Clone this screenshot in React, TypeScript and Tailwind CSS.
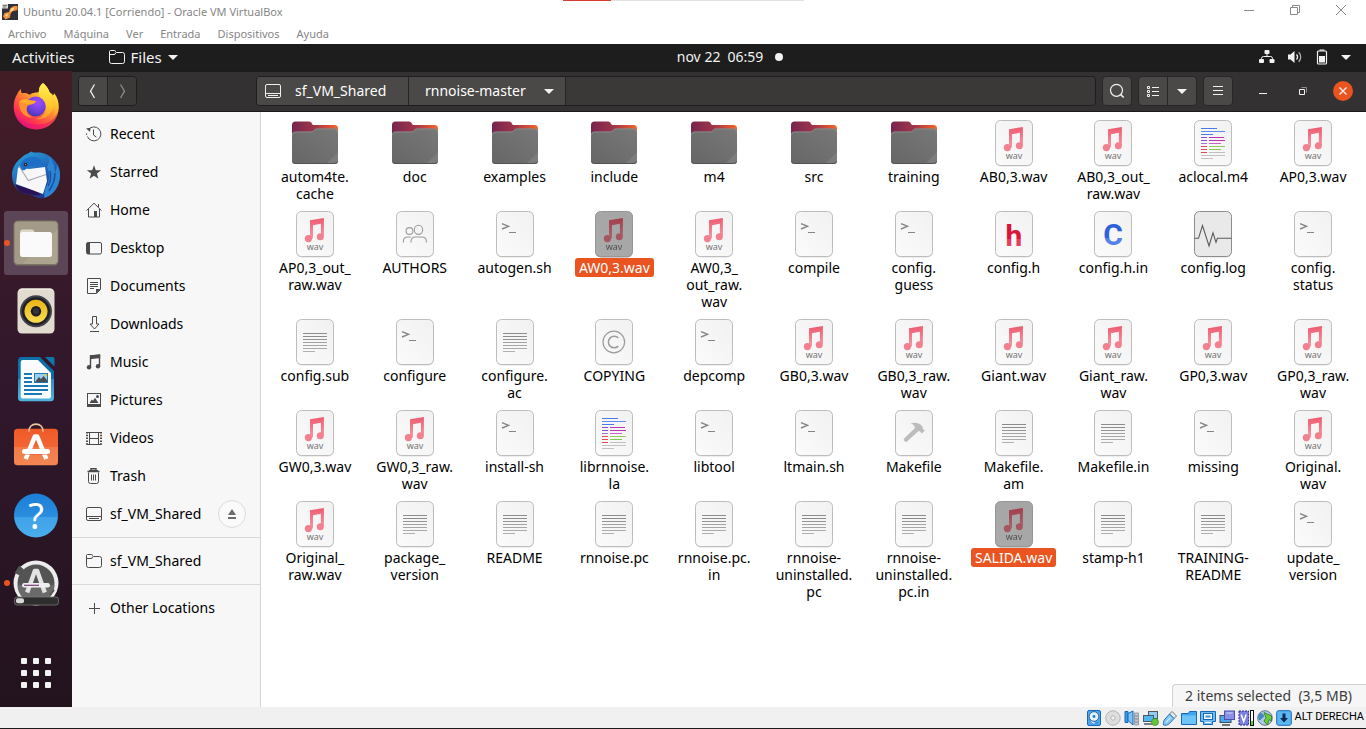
import type { ReactNode } from "react";

const UI = "font-['Noto_Sans',sans-serif]";

/* ---------- file grid data ---------- */

type Kind =
  | "folder" | "wav" | "code" | "authors" | "script" | "header" | "csource"
  | "log" | "text" | "copying" | "make";

type FileItem = { name: string; kind: Kind; selected?: boolean };

const files: FileItem[] = [
  { name: "autom4te.\ncache", kind: "folder" },
  { name: "doc", kind: "folder" },
  { name: "examples", kind: "folder" },
  { name: "include", kind: "folder" },
  { name: "m4", kind: "folder" },
  { name: "src", kind: "folder" },
  { name: "training", kind: "folder" },
  { name: "AB0,3.wav", kind: "wav" },
  { name: "AB0,3_out_\nraw.wav", kind: "wav" },
  { name: "aclocal.m4", kind: "code" },
  { name: "AP0,3.wav", kind: "wav" },

  { name: "AP0,3_out_\nraw.wav", kind: "wav" },
  { name: "AUTHORS", kind: "authors" },
  { name: "autogen.sh", kind: "script" },
  { name: "AW0,3.wav", kind: "wav", selected: true },
  { name: "AW0,3_\nout_raw.\nwav", kind: "wav" },
  { name: "compile", kind: "script" },
  { name: "config.\nguess", kind: "script" },
  { name: "config.h", kind: "header" },
  { name: "config.h.in", kind: "csource" },
  { name: "config.log", kind: "log" },
  { name: "config.\nstatus", kind: "script" },

  { name: "config.sub", kind: "text" },
  { name: "configure", kind: "script" },
  { name: "configure.\nac", kind: "text" },
  { name: "COPYING", kind: "copying" },
  { name: "depcomp", kind: "script" },
  { name: "GB0,3.wav", kind: "wav" },
  { name: "GB0,3_raw.\nwav", kind: "wav" },
  { name: "Giant.wav", kind: "wav" },
  { name: "Giant_raw.\nwav", kind: "wav" },
  { name: "GP0,3.wav", kind: "wav" },
  { name: "GP0,3_raw.\nwav", kind: "wav" },

  { name: "GW0,3.wav", kind: "wav" },
  { name: "GW0,3_raw.\nwav", kind: "wav" },
  { name: "install-sh", kind: "script" },
  { name: "librnnoise.\nla", kind: "code" },
  { name: "libtool", kind: "script" },
  { name: "ltmain.sh", kind: "script" },
  { name: "Makefile", kind: "make" },
  { name: "Makefile.\nam", kind: "text" },
  { name: "Makefile.in", kind: "text" },
  { name: "missing", kind: "script" },
  { name: "Original.\nwav", kind: "wav" },

  { name: "Original_\nraw.wav", kind: "wav" },
  { name: "package_\nversion", kind: "text" },
  { name: "README", kind: "text" },
  { name: "rnnoise.pc", kind: "text" },
  { name: "rnnoise.pc.\nin", kind: "text" },
  { name: "rnnoise-\nuninstalled.\npc", kind: "text" },
  { name: "rnnoise-\nuninstalled.\npc.in", kind: "text" },
  { name: "SALIDA.wav", kind: "wav", selected: true },
  { name: "stamp-h1", kind: "text" },
  { name: "TRAINING-\nREADME", kind: "text" },
  { name: "update_\nversion", kind: "script" },
];

/* ---------- file icons ---------- */

function SharedGradients() {
  return (
    <svg width="0" height="0" className="absolute" aria-hidden="true">
      <defs>
        <linearGradient id="folderBack" x1="0" y1="0" x2="1" y2="0">
          <stop offset="0" stopColor="#77244f" />
          <stop offset="0.5" stopColor="#a0354a" />
          <stop offset="0.8" stopColor="#d94f33" />
          <stop offset="1" stopColor="#ee6a30" />
        </linearGradient>
        <linearGradient id="folderFront" x1="0" y1="1" x2="1" y2="0">
          <stop offset="0" stopColor="#666666" />
          <stop offset="1" stopColor="#787878" />
        </linearGradient>
        <linearGradient id="sheet" x1="0" y1="1" x2="1" y2="0">
          <stop offset="0" stopColor="#fbfbfb" />
          <stop offset="1" stopColor="#f1f1f1" />
        </linearGradient>
        <linearGradient id="note" x1="0" y1="0" x2="0" y2="1">
          <stop offset="0" stopColor="#ee5a70" />
          <stop offset="1" stopColor="#f69aa5" />
        </linearGradient>
        <linearGradient id="redLetter" x1="0" y1="0" x2="0" y2="1">
          <stop offset="0.6" stopColor="#d9153a" />
          <stop offset="0.6" stopColor="#e33f5e" />
        </linearGradient>
        <linearGradient id="blueLetter" x1="0" y1="0" x2="0" y2="1">
          <stop offset="0.6" stopColor="#2f61db" />
          <stop offset="0.6" stopColor="#5580e6" />
        </linearGradient>
      </defs>
    </svg>
  );
}

function Lines({ rows }: { rows: [number, number, number, string][] }) {
  return (
    <>
      {rows.map(([x, y, w, c], i) => (
        <rect key={i} x={x} y={y} width={w} height="1" fill={c} />
      ))}
    </>
  );
}

const textRows: [number, number, number, string][] = [
  [12, 14, 24, "#8c8c8c"], [12, 17, 24, "#8c8c8c"], [12, 20, 24, "#949494"],
  [12, 23, 24, "#a2a2a2"], [12, 26, 24, "#a5a5a5"], [12, 29, 24, "#aaaaaa"], [12, 32, 12, "#b0b0b0"],
];

const codeRows: [number, number, number, string][] = [
  [12, 8, 16, "#4b7be8"], [12, 11, 24, "#5f8cf0"], [12, 14, 12, "#4b7be8"],
  [12, 17, 6, "#8a4fc8"], [20, 17, 15, "#bb35b5"],
  [12, 20, 6, "#8a4fc8"], [20, 20, 16, "#bb35b5"],
  [12, 23, 6, "#a673dd"], [20, 23, 12, "#d05fcd"],
  [12, 26, 6, "#e64560"], [20, 26, 16, "#8fd05a"],
  [12, 29, 6, "#e64560"], [20, 29, 12, "#86c94a"],
  [12, 32, 6, "#e64560"], [20, 32, 16, "#bfbfbf"],
  [12, 35, 24, "#c2c2c2"], [12, 38, 12, "#c2c2c2"],
];

const glyphs: Record<Exclude<Kind, "folder">, ReactNode> = {
  wav: (
    <>
      <path
        d="M19 9.2 32.9 7v18.6h-3V12.8L22 14.2v13.4h-3z"
        fill="url(#note)"
      />
      <circle cx="17.4" cy="27.6" r="3.6" fill="#f3808e" />
      <circle cx="29.3" cy="25.7" r="3.5" fill="#f3808e" />
      <text x="24" y="38.6" textAnchor="middle" fontSize="9" fill="#747474" fontFamily="Noto Sans, sans-serif">wav</text>
    </>
  ),
  code: <Lines rows={codeRows} />,
  text: <Lines rows={textRows} />,
  script: (
    <>
      <path d="m11 12.600 6.500 2.700-6.500 2.700" fill="none" stroke="#858585" strokeWidth="1.400" />
      <rect x="18" y="21" width="7" height="1" fill="#858585" />
    </>
  ),
  authors: (
    <g fill="none" stroke="#9b9b9b" strokeWidth="1.1">
      <circle cx="18.5" cy="20" r="3.4" />
      <ellipse cx="27.5" cy="18.8" rx="4.2" ry="4.6" />
      <path d="M12.4 31.5v-1.2c0-2.6 1.8-4.3 4.4-4.3h3" />
      <path d="M20 31.5v-.8c0-2.9 2-4.7 4.8-4.7h6c2.8 0 4.6 1.8 4.6 4.7v.8" />
    </g>
  ),
  header: (
    <text x="24" y="35" textAnchor="middle" fontSize="30" fontWeight="700" fill="url(#redLetter)" fontFamily="Roboto, sans-serif">h</text>
  ),
  csource: (
    <text x="24" y="34" textAnchor="middle" fontSize="30" fontWeight="700" fill="url(#blueLetter)" fontFamily="Roboto, sans-serif">C</text>
  ),
  log: (
    <path d="M5.5 27.3h4l4-12.8 6.5 20.3 4-13 3 9.5 1.4-4h14" fill="none" stroke="#595959" strokeWidth="1.1" />
  ),
  copying: (
    <g fill="none" stroke="#9b9b9b">
      <circle cx="23.8" cy="23" r="10.8" strokeWidth="1.2" />
      <path d="M28.3 18.9a5.8 5.8 0 1 0 0 8.2" strokeWidth="1.5" />
    </g>
  ),
  make: (
    <path
      d="M20.6 13.4c4-1.2 8.3-.8 10.9 2l1.2 1.4c.2.7-.2 1.3-.1 1.8l2.2 2-3 2.9-2.1-2.2c-.6-.1-1 .2-1.5 0L17 31.4c-.6.6-1.5.6-2 0l-.9-1c-.6-.6-.5-1.5.1-2l10.6-10.2c.4-2.2-1-4-4.2-4.8z"
      fill="#bcbcbc"
    />
  ),
};

function FileIcon({ kind, selected }: { kind: Kind; selected?: boolean }) {
  if (kind === "folder") {
    return (
      <svg viewBox="0 0 48 48" className="size-12" aria-hidden="true">
        <path d="M1 14V5a3.500 3.500 0 0 1 3.500-3.500H18c1.700 0 2.400 1 3 2.200.500 1 1 1.300 2 1.300h20.500A3.500 3.500 0 0 1 47 8.500V14z" fill="url(#folderBack)" />
        <path d="M1 15a3.500 3.500 0 0 1 3.500-3.500h15c1.800 0 2.400-.400 3.500-1.600C24 8.800 24.600 8.500 26.400 8.500h17.100A3.500 3.500 0 0 1 47 12v28.500a3.500 3.500 0 0 1-3.500 3.500h-39A3.500 3.500 0 0 1 1 40.500z" fill="url(#folderFront)" />
        <path d="M47 32v8.500a3.500 3.500 0 0 1-3.500 3.500H35z" fill="#7c7c7c" />
        <path d="M1.500 41.500a3 3 0 0 0 3 2h39a3 3 0 0 0 3-2" fill="none" stroke="#525252" />
        <path d="M1.500 15a3 3 0 0 1 3-3h15c2 0 2.800-.500 3.900-1.700C24.300 9.300 24.900 9 26.400 9h17.100a3 3 0 0 1 3 3" fill="none" stroke="#8f8f8f" strokeWidth=".8" />
      </svg>
    );
  }
  return (
    <svg viewBox="0 0 48 48" className={selected ? "size-12 brightness-[.68]" : "size-12"} aria-hidden="true">
      <rect x="5.500" y="1" width="37" height="45.500" rx="5" fill="#dcdcdc" />
      <rect
        x="5.500" y="0.500" width="37" height="45" rx="5"
        fill={kind === "log" ? "#e9e9e9" : "url(#sheet)"}
        stroke={kind === "log" ? "#8c8c8c" : selected ? "#dddddd" : "#bdbdbd"}
      />
      {glyphs[kind]}
    </svg>
  );
}

/* ---------- sidebar ---------- */

function Glyph({ children }: { children: ReactNode }) {
  return (
    <svg viewBox="0 0 16 16" className="size-4 shrink-0" fill="none" stroke="#4a4a4a" aria-hidden="true">
      {children}
    </svg>
  );
}

const DriveShape = (
  <>
    <rect x=".5" y="1.500" width="15" height="13" rx="1.500" />
    <path d="M1 10.500h14M3 12.500h10" />
  </>
);
const FolderShape = (
  <path d="M.5 12.500v-10a1 1 0 0 1 1-1h4a1 1 0 0 1 1 1v0a1 1 0 0 0 1 1h6a2 2 0 0 1 2 2v7a2 2 0 0 1-2 2h-11a2 2 0 0 1-2-2zM.5 5.500H5a1.500 1.500 0 0 0 1.500-1.500" />
);

type Place = { label: string; icon: ReactNode };

const places: Place[] = [
  {
    label: "Recent",
    icon: (
      <>
        <path d="M2.300 3.700A7 7 0 1 1 1.400 10.500" />
        <path d="M.6 8.800V7.400" />
        <path d="M0 2.500 4.500 1.800 4 5.800z" fill="#4a4a4a" stroke="none" />
        <path d="M7.500 3.500V9l2.800 2" />
      </>
    ),
  },
  {
    label: "Starred",
    icon: <path d="M8 1.200 9.800 6.200h5.400l-4.300 3.300 1.500 5.200L8 11.700l-4.400 3 1.500-5.200L.8 6.200h5.400z" fill="#4a4a4a" stroke="none" />,
  },
  {
    label: "Home",
    icon: (
      <>
        <path d="M.5 8.600 8 1.200l7.500 7.400M2.500 7v8h11V7M12.500 2v3" />
        <path d="M8 9h3v6H8z" fill="#4a4a4a" stroke="none" />
      </>
    ),
  },
  {
    label: "Desktop",
    icon: (
      <>
        <rect x=".5" y="2.500" width="15" height="11.500" rx="1.500" />
        <path d="M1 3h3v11H1z" fill="#4a4a4a" stroke="none" />
      </>
    ),
  },
  {
    label: "Documents",
    icon: (
      <>
        <path d="M1.500.5h13v11l-4 4h-9z" />
        <path d="M4 4.500h8M4 6.500h8M4 8.500h8M4 10.500h4" />
        <path d="M10 11h4.500L10 15.500z" fill="#4a4a4a" stroke="none" />
      </>
    ),
  },
  {
    label: "Downloads",
    icon: <path d="M6.500.5h4V8H13l-4.500 5L4 8h2.500zM4 15.500h9" />,
  },
  {
    label: "Music",
    icon: (
      <>
        <path d="M4.500 13V2l9-1v11" strokeWidth="1.400" />
        <path d="M4 1.600 14.200.4V4L4 5.200z" fill="#4a4a4a" stroke="none" />
        <circle cx="3" cy="13.200" r="2.200" fill="#4a4a4a" stroke="none" />
        <circle cx="12" cy="12.300" r="2.200" fill="#4a4a4a" stroke="none" />
      </>
    ),
  },
  {
    label: "Pictures",
    icon: (
      <>
        <rect x="1.500" y="1.500" width="13" height="12" />
        <path d="M1 12h14v3H1zM3.500 11l2.300-3.500 1.300 1.300L9 5.800l3.500 5.200z" fill="#4a4a4a" stroke="none" />
        <circle cx="11.500" cy="4.500" r="1.500" fill="#4a4a4a" stroke="none" />
      </>
    ),
  },
  {
    label: "Videos",
    icon: (
      <>
        <path d="M3.500 2.500h9v12h-9zM3.500 8.500h9" />
        <path d="M1 2v13M15 2v13" strokeWidth="2" strokeDasharray="1.500 1.300" />
        <path d="M1 2.500h14M1 14.500h14" />
      </>
    ),
  },
  {
    label: "Trash",
    icon: (
      <>
        <path d="M1.500 3.500h12M5 2V.8h5V2" strokeWidth="1.400" />
        <path d="M2.500 4.500v9a2 2 0 0 0 2 2h6a2 2 0 0 0 2-2v-9M5.500 6.500v6M7.500 6.500v6M9.500 6.500v6" />
        <path d="M3 2h9v2H3z" fill="#4a4a4a" stroke="none" />
      </>
    ),
  },
];

function PlaceRow({ label, icon, children }: Place & { children?: ReactNode }) {
  return (
    <li className="flex h-[38px] items-center pr-3.5">
      <a href="#files" className="flex flex-1 items-center gap-2 pl-3.5 text-black">
        <Glyph>{icon}</Glyph>
        <span>{label}</span>
      </a>
      {children}
    </li>
  );
}

function Sidebar() {
  return (
    <nav aria-label="Places" className="w-[189px] shrink-0 border-r border-[#d4d4d4] bg-[#f7f7f7] pt-[3px] text-sm">
      <ul>
        {places.map((p) => (
          <PlaceRow key={p.label} {...p} />
        ))}
        <PlaceRow label="sf_VM_Shared" icon={DriveShape}>
          <button aria-label="Eject sf_VM_Shared" className="flex size-7 shrink-0 items-center justify-center rounded-full border border-[#dcdcdc] bg-[#fafafa]">
            <svg viewBox="0 0 10 10" className="size-2.5" fill="#6b6b6b" aria-hidden="true">
              <path d="M5 0 9 6H1zM1 8h8v2H1z" />
            </svg>
          </button>
        </PlaceRow>
      </ul>
      <hr className="my-1 border-[#dadada]" />
      <ul>
        <PlaceRow label="sf_VM_Shared" icon={FolderShape} />
      </ul>
      <hr className="my-1 border-[#dadada]" />
      <ul>
        <PlaceRow label="Other Locations" icon={<path d="M8.500 3v11M3 8.500h11" />} />
      </ul>
    </nav>
  );
}

/* ---------- dock ---------- */

const FirefoxIcon = (
  <>
    <defs>
      <linearGradient id="ffBody" x1="0.85" y1="0.05" x2="0.2" y2="0.95">
        <stop offset="0" stopColor="#fff44f" />
        <stop offset="0.3" stopColor="#ffbd2e" />
        <stop offset="0.55" stopColor="#ff7139" />
        <stop offset="0.8" stopColor="#ff3350" />
        <stop offset="1" stopColor="#e0128e" />
      </linearGradient>
      <radialGradient id="ffGlobe" cx="0.6" cy="0.3" r="0.75">
        <stop offset="0" stopColor="#9f4dff" />
        <stop offset="0.6" stopColor="#7040dc" />
        <stop offset="1" stopColor="#4536a8" />
      </radialGradient>
      <linearGradient id="ffTail" x1="0.4" y1="0" x2="0.3" y2="1">
        <stop offset="0" stopColor="#fff250" />
        <stop offset="0.6" stopColor="#ffc52c" />
        <stop offset="1" stopColor="#ff8d30" />
      </linearGradient>
    </defs>
    <path d="M31 0c3 2.300 5.500 6 6.500 9.500 2 .5 2.700 1.500 3.500 3 1-1.200 1-2 1-2.500 3.500 4 4.800 9 4.800 14A22.500 22.500 0 0 1 1.700 24c0-5 1.300-9.500 3.300-12.500.8-2 2.200-4 4-5.500-.200 1.800.200 3.200 1 4.300 3-.600 5.600.100 7.500 1.500C21 9 24.500 10 27 9c-.500-4 1-7 4-9z" fill="url(#ffBody)" />
    <circle cx="23.700" cy="23.500" r="10" fill="url(#ffGlobe)" />
    <path d="M31 0c3 2.300 5.500 6 7 10 4.500 6 4.700 14 .5 20-3.500 5-9 7-14.500 6 7-1.500 10.500-7 10-13-.4-4.500-3-7.500-6.200-9C25.500 9.500 27 3.500 31 0z" fill="url(#ffTail)" />
    <path d="M7 19c2-2.500 5.500-3 8.500-2.300 2.500.6 5 1 8.500 1.300 0 2.500-4 3.500-7 4-1.500.3-2 1.500-2.300 3.500C14 30 17 33 21 34.500 13 35.500 6.500 28 7 19z" fill="#ff9130" />
    <path d="M7.500 19c1.800-2.800 5-3.500 8-2.600 2.500.7 5 1.300 8.300 1.500-1 2-3.500 3-7.800 3.200z" fill="#ffab2b" />
    <path d="M2.500 30a22.500 22.500 0 0 0 43.500-1C42 38 34 42 25 41.500 14 41 7 38 2.500 30z" fill="#e8136f" opacity=".55" />
  </>
);

const ThunderbirdIcon = (
  <>
    <defs>
      <linearGradient id="tbBody" x1="0.2" y1="0" x2="0.8" y2="1">
        <stop offset="0" stopColor="#2a9fd8" />
        <stop offset="0.45" stopColor="#2268bd" />
        <stop offset="1" stopColor="#1b2f8a" />
      </linearGradient>
    </defs>
    <path d="M9 7C13 3 17 2.500 19 .5 22 2 24 1.500 28 1.500 40 3.500 48 13 48 24c0 11-7 20-18 23.500C20 46 17 41 11 43 4 39 0 32 0 24 0 17 4 10.500 9 7z" fill="url(#tbBody)" />
    <path d="M3 33c4 3 18 3 26 11-8 2-14-3-18-1-4-2-7-6-8-10z" fill="#2a1355" />
    <path d="M6 16.500 17 18l16-2 2 14-4 13L4 33z" fill="#f7f7f9" />
    <path d="M7 15 16.300 29.500 34 23.500" fill="none" stroke="#a9a9b4" strokeWidth="1.100" />
    <path d="M8.700 13C8 20 12 21 15 17c4-3.500 11-3 17-2-1-6-7-10-13-9-5 .500-9 3-10.300 7z" fill="#1c6fc4" />
    <path d="M35 16c2.500 5 3 12 0 18s-3 9-2.500 13C42 44 48 35 48 24c0-4-1-8-3-11 0 4-1 7-2 9 0-7-2.500-13-7-17 2 4 1 8-1 11z" fill="#2c85d3" />
    <path d="M38 20c1 5 1 10-2 15M43 22c0 6-2 12-6 18" fill="none" stroke="#1a4fa5" strokeWidth="1.500" />
    <circle cx="13.500" cy="13.500" r="1.800" fill="#241b3d" />
    <circle cx="13.500" cy="13.500" r=".7" fill="#e0912c" />
  </>
);

const FilesAppIcon = (
  <>
    <rect x="1.500" y="1.500" width="45" height="45" rx="4.500" fill="#7b7463" />
    <rect x="2.500" y="2.500" width="43" height="42.500" rx="3.500" fill="#a39b87" />
    <path d="M12 43 45.500 10V41a4 4 0 0 1-4 4H12z" fill="#aca48f" />
    <path d="M8 13.500a3 3 0 0 1 3-3h8c1.500 0 2.500.5 3 1.500l1 1.500h14v8H8z" fill="#dbd7cb" />
    <rect x="8" y="13" width="32" height="25" rx="2.500" fill="#fafafa" />
  </>
);

const RhythmboxIcon = (
  <>
    <defs>
      <linearGradient id="rbCone" x1="0" y1="0" x2="0" y2="1">
        <stop offset="0" stopColor="#e9b514" />
        <stop offset="1" stopColor="#fbdc55" />
      </linearGradient>
    </defs>
    <rect x="5.500" y="1.500" width="37" height="45" rx="4.500" fill="#e1dccf" />
    <path d="M7 3.500a4 4 0 0 1 3-1.500h28a4 4 0 0 1 3 1.500" fill="none" stroke="#f8f6f0" />
    <circle cx="24" cy="24.300" r="16" fill="#40414a" />
    <circle cx="24" cy="24.300" r="14" fill="#202128" />
    <circle cx="24" cy="24.300" r="11.500" fill="url(#rbCone)" />
    <circle cx="24" cy="24.300" r="5.200" fill="#1e1f25" />
    <circle cx="24" cy="24.300" r="3" fill="#35363d" />
  </>
);

const WriterIcon = (
  <>
    <defs>
      <linearGradient id="lwEdge" x1="0" y1="0" x2="0" y2="1">
        <stop offset="0.5" stopColor="#0d6ea8" />
        <stop offset="0.5" stopColor="#2f8fc2" />
        <stop offset="1" stopColor="#52b4e0" />
      </linearGradient>
    </defs>
    <path d="M6 5.500A3.500 3.500 0 0 1 9.500 2H28l14 14v26.800a3.500 3.500 0 0 1-3.500 3.500h-29A3.500 3.500 0 0 1 6 42.800z" fill="url(#lwEdge)" />
    <path d="M8.700 7A2 2 0 0 1 10.700 5H26l13 13v23.500a2 2 0 0 1-2 2H10.700a2 2 0 0 1-2-2z" fill="#f9fbfc" />
    <path d="M33 2h7.500a2 2 0 0 1 2 2v7.500z" fill="#1076ae" />
    <path d="M12 19h8M12 23h8M12 27h8M12 31h24M12 35h24M12 39h18" stroke="#1d79b4" strokeWidth="1.900" />
    <rect x="22" y="18" width="14" height="10" fill="#1d79b4" />
    <rect x="23" y="19" width="12" height="8" fill="#9bd1f0" />
    <path d="m23 27 4-5 2 2 2.500-3L35 25v2z" fill="#4c4d50" />
    <path d="M32 19h3v3z" fill="#f6c32c" />
  </>
);

const SoftwareIcon = (
  <>
    <defs>
      <linearGradient id="bag" x1="0" y1="0" x2="0" y2="1">
        <stop offset="0" stopColor="#ee5a28" />
        <stop offset="0.5" stopColor="#f26533" />
        <stop offset="0.5" stopColor="#f27a4b" />
        <stop offset="1" stopColor="#f48653" />
      </linearGradient>
    </defs>
    <rect x="2" y="5.700" width="44" height="36.500" rx="3.500" fill="url(#bag)" />
    <path d="M17 8.500C17 4 20 1.200 24 1.200S31 4 31 8.500" fill="none" stroke="#ecc99d" strokeWidth="1.800" />
    <path d="M13.700 36 22.800 13.500h2.400L34.300 36" fill="none" stroke="#fff" strokeWidth="4.600" strokeLinejoin="round" />
    <rect x="10" y="26" width="28" height="5" rx="2.500" fill="#fff" />
    <path d="M11 31.500h26" stroke="#d4572c" strokeWidth=".8" opacity=".6" />
  </>
);

const HelpIcon = (
  <>
    <defs>
      <linearGradient id="helpDisc" x1="0" y1="0" x2="0" y2="1">
        <stop offset="0" stopColor="#1c7ed6" />
        <stop offset="0.54" stopColor="#2b8ede" />
        <stop offset="0.54" stopColor="#40a2e8" />
        <stop offset="1" stopColor="#4aaded" />
      </linearGradient>
    </defs>
    <circle cx="24" cy="24.500" r="22" fill="url(#helpDisc)" />
    <text x="24" y="38" textAnchor="middle" fontSize="36" fill="#fff" fontFamily="Noto Sans, sans-serif">?</text>
  </>
);

const UpdaterIcon = (
  <>
    <circle cx="24" cy="24" r="22.500" fill="#ececec" />
    <circle cx="24" cy="24" r="18.500" fill="#545454" />
    <path d="M5.500 26h37A18.500 18.500 0 0 1 5.500 26z" fill="#6a6a6a" />
    <path d="M4 13.500 7.500 8l3 2.500-2.500 5zM38 36l4-5" stroke="#545454" strokeWidth="2" fill="#545454" />
    <path d="M15.200 33.500 22.800 12h2.400l7.600 21.500" fill="none" stroke="#e3e3e3" strokeWidth="4.400" strokeLinejoin="round" />
    <rect x="10" y="24" width="28" height="4.600" rx="2.300" fill="#eeeeee" />
    <path d="M12 26.300h15" stroke="#7b3b77" strokeWidth="1.200" />
    <rect x="2.500" y="38" width="44" height="8" rx="2.500" fill="#2e2e2e" stroke="#777" strokeWidth=".8" />
    <rect x="4" y="39.300" width="8" height="5" rx="2" fill="#d8d8d8" />
  </>
);

const dockApps: { name: string; icon: ReactNode; active?: boolean; running?: boolean }[] = [
  { name: "Firefox", icon: FirefoxIcon },
  { name: "Thunderbird", icon: ThunderbirdIcon },
  { name: "Files", icon: FilesAppIcon, active: true, running: true },
  { name: "Rhythmbox", icon: RhythmboxIcon },
  { name: "LibreOffice Writer", icon: WriterIcon },
  { name: "Ubuntu Software", icon: SoftwareIcon },
  { name: "Help", icon: HelpIcon },
  { name: "Software Updater", icon: UpdaterIcon, running: true },
];

function Dock() {
  return (
    <aside className="flex w-[72px] shrink-0 flex-col gap-1 bg-linear-to-b from-[#421d26] via-[#31172c] to-[#22131d] px-1 pt-1 pb-0.5">
      {dockApps.map((app) => (
        <button
          key={app.name}
          aria-label={app.name}
          className={
            app.active
              ? "relative flex size-16 items-center justify-center rounded-[3px] bg-[#5d4558]"
              : "relative flex size-16 items-center justify-center rounded-[3px]"
          }
        >
          {app.running && <span className="absolute left-0 size-1.5 rounded-full bg-[#e95420]" />}
          <svg viewBox="0 0 48 48" className="size-12" aria-hidden="true">{app.icon}</svg>
        </button>
      ))}
      <button aria-label="Show Applications" className="mt-auto flex size-16 items-center justify-center">
        <span className="grid grid-cols-3 gap-1.5">
          {Array.from({ length: 9 }, (_, i) => (
            <span key={i} className="size-1.5 rounded-[1px] bg-[#f2f2f2]" />
          ))}
        </span>
      </button>
    </aside>
  );
}

/* ---------- host window chrome ---------- */

function HostTitle() {
  return (
    <header className="relative bg-white text-[11px] text-[#868686]">
      <div className="absolute top-0 left-[563px] flex h-px w-[241px] bg-[#e2e2e2]">
        <span className="w-12 bg-[#d93a32]" />
      </div>
      <div className="flex h-6 items-center pl-0.5">
        <svg viewBox="0 0 16 16" className="size-4" aria-hidden="true">
          <rect width="16" height="16" fill="#30313a" />
          <path d="M0 0h6v4.500H0z" fill="#d5d5d5" />
          <path d="M1 1.500h4M1 3h3" stroke="#555" strokeWidth=".7" />
          <path d="M15.500 2v4L10 7.500 8.500 10 8 13.500 3.500 15.500 1 12.500 2.500 9 7 8 8.500 4 12 2z" fill="#ef9138" />
          <path d="m9 4.500 3.500-1L11 6.500 8 8zM3 11l3-1.500L5 13z" fill="#f9d9ac" />
        </svg>
        <h1 className="ml-[5px]">Ubuntu 20.04.1 [Corriendo] - Oracle VM VirtualBox</h1>
        <div className="ml-auto flex items-center pr-[2px]">
          {[
            ["Minimizar", "M3 8.500h10"],
            ["Restaurar", "M3.500 5.500h7v7h-7zM5.500 5.500v-2h7v7h-2"],
            ["Cerrar", "m3 3 10 10M13 3 3 13"],
          ].map(([label, d]) => (
            <button key={label} aria-label={label} className="flex h-5 w-[46px] items-center justify-center pb-1">
              <svg viewBox="0 0 16 16" className="size-4" fill="none" stroke="#8a8a8a" aria-hidden="true">
                <path d={d} />
              </svg>
            </button>
          ))}
        </div>
      </div>
      <nav className="flex h-5 items-center gap-[17px] pl-2">
        {["Archivo", "Máquina", "Ver", "Entrada", "Dispositivos", "Ayuda"].map((m) => (
          <button key={m}>{m}</button>
        ))}
      </nav>
    </header>
  );
}

function Caret({ color = "#f2f2f2" }: { color?: string }) {
  return (
    <svg viewBox="0 0 10 5" className="h-[5px] w-2.5" fill={color} aria-hidden="true">
      <path d="M0 0h10L5 5z" />
    </svg>
  );
}

function TopBar() {
  return (
    <div className="grid h-[27px] grid-cols-[1fr_auto_1fr] items-center bg-[#1d1d1d] pb-px text-sm text-[#f2f2f2]">
      <div className="flex items-center pl-3 text-[15px]/5">
        <button>Activities</button>
        <button className="ml-[34px] flex items-center gap-1.5">
          <svg viewBox="0 0 16 16" className="size-4" fill="none" stroke="#f2f2f2" aria-hidden="true">{FolderShape}</svg>
          <span>Files</span>
          <Caret />
        </button>
      </div>
      <button className="flex items-center pl-[94px]">
        <span>nov 22</span>
        <span className="ml-[7px]">06:59</span>
        <span className="ml-3 size-2 rounded-full bg-[#f2f2f2]" />
      </button>
      <button aria-label="System menu" className="flex items-center justify-end gap-3 pr-[15px]">
        <svg viewBox="0 0 16 16" className="size-4" fill="#f2f2f2" aria-hidden="true">
          <rect x="5.500" y="1" width="5" height="4" rx="1" />
          <rect x="0" y="10" width="5" height="4" rx="1" />
          <rect x="10.500" y="10" width="5" height="4" rx="1" />
          <path d="M8 4v4M2.500 11V9.500a2 2 0 0 1 2-2h7a2 2 0 0 1 2 2V11" fill="none" stroke="#f2f2f2" />
        </svg>
        <svg viewBox="0 0 16 16" className="size-4" aria-hidden="true">
          <path d="M1 5.500h2.500L7.500 2v12l-4-3.500H1z" fill="#f2f2f2" />
          <path d="M9.500 5.500a3.500 3.500 0 0 1 0 5" fill="none" stroke="#f2f2f2" strokeWidth="1.300" />
          <path d="M11.700 3.300a6.500 6.500 0 0 1 0 9.400" fill="none" stroke="#b5b5b5" strokeWidth="1.200" />
        </svg>
        <svg viewBox="1 0 14 16" className="h-4 w-3.5" aria-hidden="true">
          <path d="M5.500.5h5v1.200h-5z" fill="#f2f2f2" />
          <rect x="3.500" y="2" width="9" height="13" rx="1" fill="none" stroke="#f2f2f2" strokeWidth="1.200" />
          <path d="M5 7h6v6.500H5z" fill="#f2f2f2" />
        </svg>
        <Caret />
      </button>
    </div>
  );
}

/* ---------- file manager ---------- */

function HeaderIcon({ children }: { children: ReactNode }) {
  return (
    <svg viewBox="0 0 16 16" className="size-4" fill="none" stroke="#f0f0f0" aria-hidden="true">
      {children}
    </svg>
  );
}

function WindowHeader() {
  return (
    <div className="flex h-[41px] shrink-0 items-center border-t border-b border-t-[#1c1b1b] border-b-[#1b1a1a] bg-[#333132] pr-[3px] pb-px pl-1.5 text-sm text-white">
      <div className="flex h-[30px] w-[59px] overflow-hidden rounded-[4px] border border-[#1f1e1e]">
        <button aria-label="Back" className="flex flex-1 items-center justify-center border-r border-[#242323] bg-[#494847]">
          <HeaderIcon><path d="M9.500 1.500 5.500 8.200l4 6.800" strokeWidth="1.300" /></HeaderIcon>
        </button>
        <button aria-label="Forward" className="flex flex-1 items-center justify-center bg-[#3b3a39]">
          <HeaderIcon><path d="m6.500 1.500 4 6.700-4 6.800" stroke="#8d8d8b" strokeWidth="1.300" /></HeaderIcon>
        </button>
      </div>
      <div className="ml-[119px] flex h-[30px] flex-1 overflow-hidden rounded-[4px] border border-[#1f1e1e] bg-[#3a3937]">
        <button className="flex w-[152px] items-center gap-3.5 border-r border-[#262525] bg-[#4a4947] pl-2">
          <HeaderIcon>{DriveShape}</HeaderIcon>
          <span>sf_VM_Shared</span>
        </button>
        <button className="flex w-[157px] items-center justify-between border-r border-[#262525] bg-[#4a4947] pr-[11px] pl-4">
          <span>rnnoise-master</span>
          <Caret />
        </button>
      </div>
      <button aria-label="Search" className="ml-1.5 flex h-[30px] w-[30px] items-center justify-center rounded-[4px] border border-[#282727] bg-[#4a4947]">
        <HeaderIcon>
          <circle cx="7.500" cy="7.300" r="6" strokeWidth="1.200" />
          <path d="m11.700 11.700 3 2.800" strokeWidth="1.600" />
        </HeaderIcon>
      </button>
      <div className="ml-1.5 flex h-[30px] w-[59px] overflow-hidden rounded-[4px] border border-[#282727] bg-[#4a4947]">
        <button aria-label="List view" className="flex flex-1 items-center justify-center border-r border-[#282727]">
          <HeaderIcon>
            <path d="M2.500 3.500h2v2h-2zM2.500 7.500h2v2h-2zM2.500 11.500h2v2h-2zM7 4.500h7M7 8.500h7M7 12.500h7" />
          </HeaderIcon>
        </button>
        <button aria-label="View options" className="flex flex-1 items-center justify-center"><Caret /></button>
      </div>
      <button aria-label="Menu" className="ml-1.5 flex h-[30px] w-[30px] items-center justify-center rounded-[4px] border border-[#282727] bg-[#4a4947]">
        <HeaderIcon><path d="M3 3.500h10M3 7.500h10M3 11.500h10" /></HeaderIcon>
      </button>
      <div className="ml-2.5 flex">
        <button aria-label="Minimize" className="flex w-10 items-center justify-center">
          <HeaderIcon><path d="M4 10.500h8" /></HeaderIcon>
        </button>
        <button aria-label="Restore" className="flex w-10 items-center justify-center">
          <HeaderIcon>
            <path d="M4.500 6.500h5v5h-5z" />
            <path d="M6.500 4.500h5v5" stroke="#8f8f8f" />
          </HeaderIcon>
        </button>
        <button aria-label="Close" className="flex w-10 items-center justify-center">
          <span className="flex size-5 items-center justify-center rounded-full bg-[#e95420]">
            <HeaderIcon><path d="m4.500 4.500 7 7M11.500 4.500l-7 7" strokeWidth="1.400" /></HeaderIcon>
          </span>
        </button>
      </div>
    </div>
  );
}

function FileGrid() {
  return (
    <ul id="files" className="grid grid-cols-11 gap-y-2 pt-2 pr-[3px] pl-1 text-center text-sm/[17px] text-black">
      {files.map((f) => (
        <li key={f.name} className="flex flex-col items-center">
          <FileIcon kind={f.kind} selected={f.selected} />
          <span
            className={
              f.selected
                ? "-mt-px rounded-[3px] bg-[#e95420] px-1 py-px whitespace-pre text-white"
                : "-mt-px px-1 py-px whitespace-pre"
            }
          >
            {f.name}
          </span>
        </li>
      ))}
    </ul>
  );
}

/* ---------- host status bar ---------- */

const statusIcons: { name: string; art: ReactNode }[] = [
  {
    name: "Hard disks",
    art: (
      <>
        <rect x="1.500" y=".5" width="13" height="15" rx="1.500" fill="#4aa8ee" stroke="#1769b8" />
        <circle cx="8" cy="6.500" r="4.800" fill="#e6f4fd" stroke="#1a4f8a" strokeWidth=".8" />
        <circle cx="8" cy="6.500" r="1.400" fill="#2479c4" />
        <path d="m3 9.500 4 4.500 5-1-4-1z" fill="#fff" stroke="#1769b8" strokeWidth=".6" />
      </>
    ),
  },
  {
    name: "Optical drives",
    art: (
      <>
        <circle cx="8" cy="8" r="7.200" fill="#dedede" stroke="#b4b4b4" />
        <circle cx="8" cy="8" r="2.200" fill="#f3f3f3" stroke="#b4b4b4" />
      </>
    ),
  },
  {
    name: "Audio",
    art: (
      <>
        <path d="M1 1.500h3v11H1z" fill="#3e9de4" stroke="#1769b8" />
        <path d="M4 3.500 9 1v14l-5-4.500z" fill="#7cc4f5" stroke="#1769b8" />
        <path d="M10.500 3v12h4V3z" fill="#c4c7ca" stroke="#9a9da1" />
        <path d="M11 6h3M11 9h3M11 12h3" stroke="#83878b" />
      </>
    ),
  },
  {
    name: "Network",
    art: (
      <>
        <rect x="5.500" y="1.500" width="9" height="7" fill="#8ecdf4" stroke="#505860" />
        <rect x=".5" y="5.500" width="10" height="6" fill="#4fb4f2" stroke="#505860" />
        <path d="M1 14h9" stroke="#505860" strokeWidth="1.500" />
        <circle cx="12" cy="12" r="3.500" fill="#65c53a" stroke="#3c8a1c" strokeWidth=".7" />
      </>
    ),
  },
  {
    name: "USB",
    art: (
      <>
        <path d="M10 1.500 14.500 6 12 8.500 7.500 4z" fill="#e8edf2" stroke="#6c7680" />
        <path d="M7.500 4 12 8.500l-4.500 5c-2 1.800-4.500 2-6 1.500-.500-1.500 0-4 1.500-6z" fill="#82c8f4" stroke="#2774b8" />
        <path d="m4 12.500 4.500-5" stroke="#eef8ff" />
      </>
    ),
  },
  {
    name: "Shared folders",
    art: (
      <>
        <path d="M.500 3.500h7l1-2h7v13h-15z" fill="#3fa7ef" stroke="#1769b8" />
        <path d="M1 5.500h14v8.500H1z" fill="#6dc4f7" />
      </>
    ),
  },
  {
    name: "Display",
    art: (
      <>
        <path d="M.5 1.500h15v10h-3v3h-9v-3h-3z" fill="#6dbcf2" stroke="#1769b8" />
        <rect x="3.500" y="3.500" width="9" height="6" fill="#f1f9ff" stroke="#1769b8" />
        <rect x="5.500" y="5.500" width="5" height="2" fill="#3891d8" />
        <path d="M5 12.500h6" stroke="#fff" />
      </>
    ),
  },
  {
    name: "Recording",
    art: (
      <>
        <rect x="1" y="5.500" width="11" height="7" fill="#4aa8ee" stroke="#444c55" />
        <path d="M3 15h8" stroke="#444c55" strokeWidth="1.500" />
        <rect x="5.500" y="1" width="10" height="8.500" fill="#8a90e2" stroke="#4b4fae" />
        <path d="M7.500 3h6" stroke="#d4d7ff" />
      </>
    ),
  },
  {
    name: "Features",
    art: (
      <>
        <rect x="1" y="1" width="9.500" height="14" fill="#7b7fe0" stroke="#2c2f8c" strokeDasharray="2 1" />
        <path d="m3.200 4.500 2.500 7 2.500-7" fill="none" stroke="#fff" strokeWidth="1.500" />
        <rect x="12.500" y=".5" width="3" height="15" fill="#fff" stroke="#111" />
        <rect x="13" y="11" width="2" height="4" fill="#59d02c" />
      </>
    ),
  },
  {
    name: "Mouse integration",
    art: (
      <>
        <circle cx="8" cy="8" r="7.300" fill="#a9cbe6" stroke="#66788a" />
        <path d="M3 3c2 0 4 1 4 3s-3 2-3 4l-2 0C.5 7 1 5 3 3z" fill="#4a87c0" />
        <path d="M7 2.500 14.500 6v5L12 9.500 10.500 15 7 11l2-3z" fill="#6ecb3c" stroke="#2f7a17" strokeWidth=".8" />
      </>
    ),
  },
  {
    name: "Keyboard",
    art: (
      <>
        <rect x=".7" y=".7" width="14.600" height="14.600" rx="2" fill="#5db6f2" stroke="#1769b8" />
        <path d="M6.500 3.500h3V8H12l-4 4.500L4 8h2.500z" fill="#0d2b55" />
      </>
    ),
  },
];

function HostStatus() {
  return (
    <footer className="flex h-[22px] items-center justify-end gap-[3px] border-b border-[#1a1a1a] bg-[#f0f0f0] pr-0.5">
      {statusIcons.map((s) => (
        <button key={s.name} aria-label={s.name}>
          <svg viewBox="0 0 16 16" className="size-4" aria-hidden="true">{s.art}</svg>
        </button>
      ))}
      <span className="font-['Roboto',sans-serif] text-[11px] text-black">ALT DERECHA</span>
    </footer>
  );
}

export default function App() {
  return (
    <div className={`flex min-h-screen flex-col bg-white ${UI}`}>
      <SharedGradients />
      <HostTitle />
      <TopBar />
      <div className="flex flex-1">
        <Dock />
        <section className="flex min-w-0 flex-1 flex-col">
          <WindowHeader />
          <div className="flex flex-1">
            <Sidebar />
            <main className="relative flex-1 bg-white">
              <FileGrid />
              <p className="absolute right-0 bottom-0 rounded-tl-[4px] border-t border-l border-[#d0d0d0] bg-[#f6f6f6] pr-3.5 pl-3 text-sm/[22px] whitespace-pre text-[#3d3d3d]">
                {"2 items selected  (3,5 MB)"}
              </p>
            </main>
          </div>
        </section>
      </div>
      <HostStatus />
    </div>
  );
}
